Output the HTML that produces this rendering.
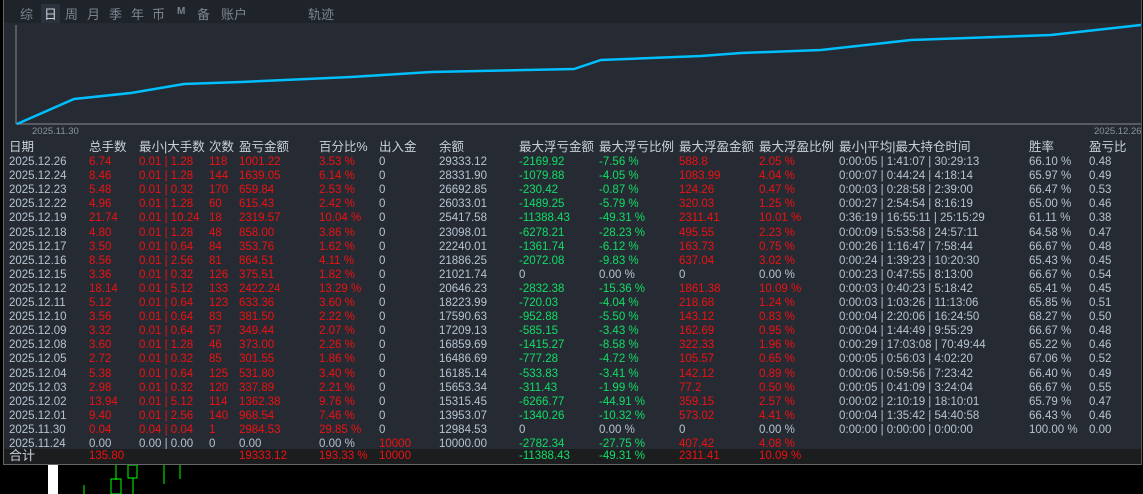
<!DOCTYPE html><html><head><meta charset="utf-8"><style>
body{margin:0;width:1143px;height:494px;background:#000;overflow:hidden;font-family:"Liberation Sans","Noto Sans CJK SC",sans-serif;position:relative}
#p{position:absolute;left:3px;top:0;width:1137px;height:464px;background:#262b33;border-left:1px solid #666;border-bottom:1px solid #666;border-right:1px solid #555}
#tb{position:absolute;left:0;top:0;width:1137px;height:23px;background:#1f232a}
#tb span{position:absolute;top:4px;font-size:13px;color:#7d8590}
.r{position:absolute;left:0;width:1137px;height:14px;font-size:11.5px;line-height:14px;color:#b6c3d1;white-space:nowrap}
.r span{position:absolute;top:0}
.h{font-size:12.5px;color:#c8d0da}
.R{color:#ee1111}.G{color:#11dd66}
#tot{position:absolute;left:0;top:449px;width:1137px;height:15px;background:#1c1d1f}
</style></head><body>
<div id="p">
<div id="tb"><span style="left:16px">综</span><span style="left:37px;background:#2c323b;color:#c8d0da;padding:0 3px">日</span><span style="left:61px">周</span><span style="left:83px">月</span><span style="left:105px">季</span><span style="left:127px">年</span><span style="left:148px">币</span><span style="left:173px;font-size:10px;top:6px;font-weight:bold">M</span><span style="left:193px">备</span><span style="left:217px">账户</span><span style="left:304px">轨迹</span></div>
<svg style="position:absolute;left:0;top:0" width="1137" height="140">
<line x1="12" y1="25" x2="12" y2="124" stroke="#888" stroke-width="1"/>
<line x1="12" y1="124" x2="1137" y2="124" stroke="#888" stroke-width="1"/>
<polyline fill="none" stroke="#00bfff" stroke-width="2.5" points="13,124 70,99 127,93 180,84 237,82 347,77 427,72 570,69 597,60 697,56 737,53 817,50 907,40 1047,35 1137,25"/>
<text x="28" y="134" font-size="9.5" fill="#8a929c" font-family="Liberation Sans">2025.11.30</text>
<text x="1090" y="134" font-size="9.5" fill="#8a929c" font-family="Liberation Sans">2025.12.26</text>
</svg>
<div class="r h" style="top:140px"><span style="left:5px">日期</span><span style="left:85px">总手数</span><span style="left:135px">最小|大手数</span><span style="left:205px">次数</span><span style="left:235px">盈亏金额</span><span style="left:315px">百分比%</span><span style="left:375px">出入金</span><span style="left:435px">余额</span><span style="left:515px">最大浮亏金额</span><span style="left:595px">最大浮亏比例</span><span style="left:675px">最大浮盈金额</span><span style="left:755px">最大浮盈比例</span><span style="left:835px">最小|平均|最大持仓时间</span><span style="left:1025px">胜率</span><span style="left:1085px">盈亏比</span></div>
<div id="rows"></div>
<div id="tot"></div>
</div>
<div style="position:absolute;left:48px;top:465px;width:10px;height:29px;background:#fff"></div>
<svg style="position:absolute;left:0;top:465px" width="300" height="29"><g stroke="#00ff00" fill="none" stroke-width="1"><line x1="84" y1="20" x2="84" y2="29"/><line x1="116" y1="0" x2="116" y2="15"/><rect x="111" y="14" width="10" height="15"/><rect x="128" y="0" width="9" height="13"/><line x1="133" y1="13" x2="133" y2="29"/><line x1="164" y1="0" x2="164" y2="19"/><line x1="180" y1="0" x2="180" y2="14"/></g></svg>
<script>
var d=[
["2025.12.26","6.74","0.01 | 1.28","118","1001.22","3.53 %","0","29333.12","-2169.92","-7.56 %","588.8","2.05 %","0:00:05 | 1:41:07 | 30:29:13","66.10 %","0.48"],
["2025.12.24","8.46","0.01 | 1.28","144","1639.05","6.14 %","0","28331.90","-1079.88","-4.05 %","1083.99","4.04 %","0:00:07 | 0:44:24 | 4:18:14","65.97 %","0.49"],
["2025.12.23","5.48","0.01 | 0.32","170","659.84","2.53 %","0","26692.85","-230.42","-0.87 %","124.26","0.47 %","0:00:03 | 0:28:58 | 2:39:00","66.47 %","0.53"],
["2025.12.22","4.96","0.01 | 1.28","60","615.43","2.42 %","0","26033.01","-1489.25","-5.79 %","320.03","1.25 %","0:00:27 | 2:54:54 | 8:16:19","65.00 %","0.46"],
["2025.12.19","21.74","0.01 | 10.24","18","2319.57","10.04 %","0","25417.58","-11388.43","-49.31 %","2311.41","10.01 %","0:36:19 | 16:55:11 | 25:15:29","61.11 %","0.38"],
["2025.12.18","4.80","0.01 | 1.28","48","858.00","3.86 %","0","23098.01","-6278.21","-28.23 %","495.55","2.23 %","0:00:09 | 5:53:58 | 24:57:11","64.58 %","0.47"],
["2025.12.17","3.50","0.01 | 0.64","84","353.76","1.62 %","0","22240.01","-1361.74","-6.12 %","163.73","0.75 %","0:00:26 | 1:16:47 | 7:58:44","66.67 %","0.48"],
["2025.12.16","8.56","0.01 | 2.56","81","864.51","4.11 %","0","21886.25","-2072.08","-9.83 %","637.04","3.02 %","0:00:24 | 1:39:23 | 10:20:30","65.43 %","0.45"],
["2025.12.15","3.36","0.01 | 0.32","126","375.51","1.82 %","0","21021.74","0","0.00 %","0","0.00 %","0:00:23 | 0:47:55 | 8:13:00","66.67 %","0.54"],
["2025.12.12","18.14","0.01 | 5.12","133","2422.24","13.29 %","0","20646.23","-2832.38","-15.36 %","1861.38","10.09 %","0:00:03 | 0:40:23 | 5:18:42","65.41 %","0.45"],
["2025.12.11","5.12","0.01 | 0.64","123","633.36","3.60 %","0","18223.99","-720.03","-4.04 %","218.68","1.24 %","0:00:03 | 1:03:26 | 11:13:06","65.85 %","0.51"],
["2025.12.10","3.56","0.01 | 0.64","83","381.50","2.22 %","0","17590.63","-952.88","-5.50 %","143.12","0.83 %","0:00:04 | 2:20:06 | 16:24:50","68.27 %","0.50"],
["2025.12.09","3.32","0.01 | 0.64","57","349.44","2.07 %","0","17209.13","-585.15","-3.43 %","162.69","0.95 %","0:00:04 | 1:44:49 | 9:55:29","66.67 %","0.48"],
["2025.12.08","3.60","0.01 | 1.28","46","373.00","2.26 %","0","16859.69","-1415.27","-8.58 %","322.33","1.96 %","0:00:29 | 17:03:08 | 70:49:44","65.22 %","0.46"],
["2025.12.05","2.72","0.01 | 0.32","85","301.55","1.86 %","0","16486.69","-777.28","-4.72 %","105.57","0.65 %","0:00:05 | 0:56:03 | 4:02:20","67.06 %","0.52"],
["2025.12.04","5.38","0.01 | 0.64","125","531.80","3.40 %","0","16185.14","-533.83","-3.41 %","142.12","0.89 %","0:00:06 | 0:59:56 | 7:23:42","66.40 %","0.49"],
["2025.12.03","2.98","0.01 | 0.32","120","337.89","2.21 %","0","15653.34","-311.43","-1.99 %","77.2","0.50 %","0:00:05 | 0:41:09 | 3:24:04","66.67 %","0.55"],
["2025.12.02","13.94","0.01 | 5.12","114","1362.38","9.76 %","0","15315.45","-6266.77","-44.91 %","359.15","2.57 %","0:00:02 | 2:10:19 | 18:10:01","65.79 %","0.47"],
["2025.12.01","9.40","0.01 | 2.56","140","968.54","7.46 %","0","13953.07","-1340.26","-10.32 %","573.02","4.41 %","0:00:04 | 1:35:42 | 54:40:58","66.43 %","0.46"],
["2025.11.30","0.04","0.04 | 0.04","1","2984.53","29.85 %","0","12984.53","0","0.00 %","0","0.00 %","0:00:00 | 0:00:00 | 0:00:00","100.00 %","0.00"],
["2025.11.24","0.00","0.00 | 0.00","0","0.00","0.00 %","10000","10000.00","-2782.34","-27.75 %","407.42","4.08 %","","",""]];
var X=[5,85,135,205,235,315,375,435,515,595,675,755,835,1025,1085];
var h="";
d.forEach(function(r,i){var last=i==20;h+='<div class="r" style="top:'+(155+i*14.1).toFixed(1)+'px">';r.forEach(function(v,j){var c="";
if(!last&&j>=1&&j<=5)c="R";if(last&&j==6)c="R";if(j==8||j==9)c=(v=="0"||v=="0.00 %")?"":"G";if(j==10||j==11)c=(v=="0"||v=="0.00 %")?"":"R";
h+='<span class="'+c+'" style="left:'+X[j]+'px">'+v+'</span>';});h+='</div>';});
document.getElementById("rows").innerHTML=h;
document.getElementById("tot").innerHTML='<div class="r" style="top:0px"><span class="h" style="left:5px;font-size:13px">合计</span><span class="R" style="left:85px">135.80</span><span class="R" style="left:235px">19333.12</span><span class="R" style="left:315px">193.33 %</span><span class="R" style="left:375px">10000</span><span class="G" style="left:515px">-11388.43</span><span class="G" style="left:595px">-49.31 %</span><span class="R" style="left:675px">2311.41</span><span class="R" style="left:755px">10.09 %</span></div>';
</script>
</body></html>
